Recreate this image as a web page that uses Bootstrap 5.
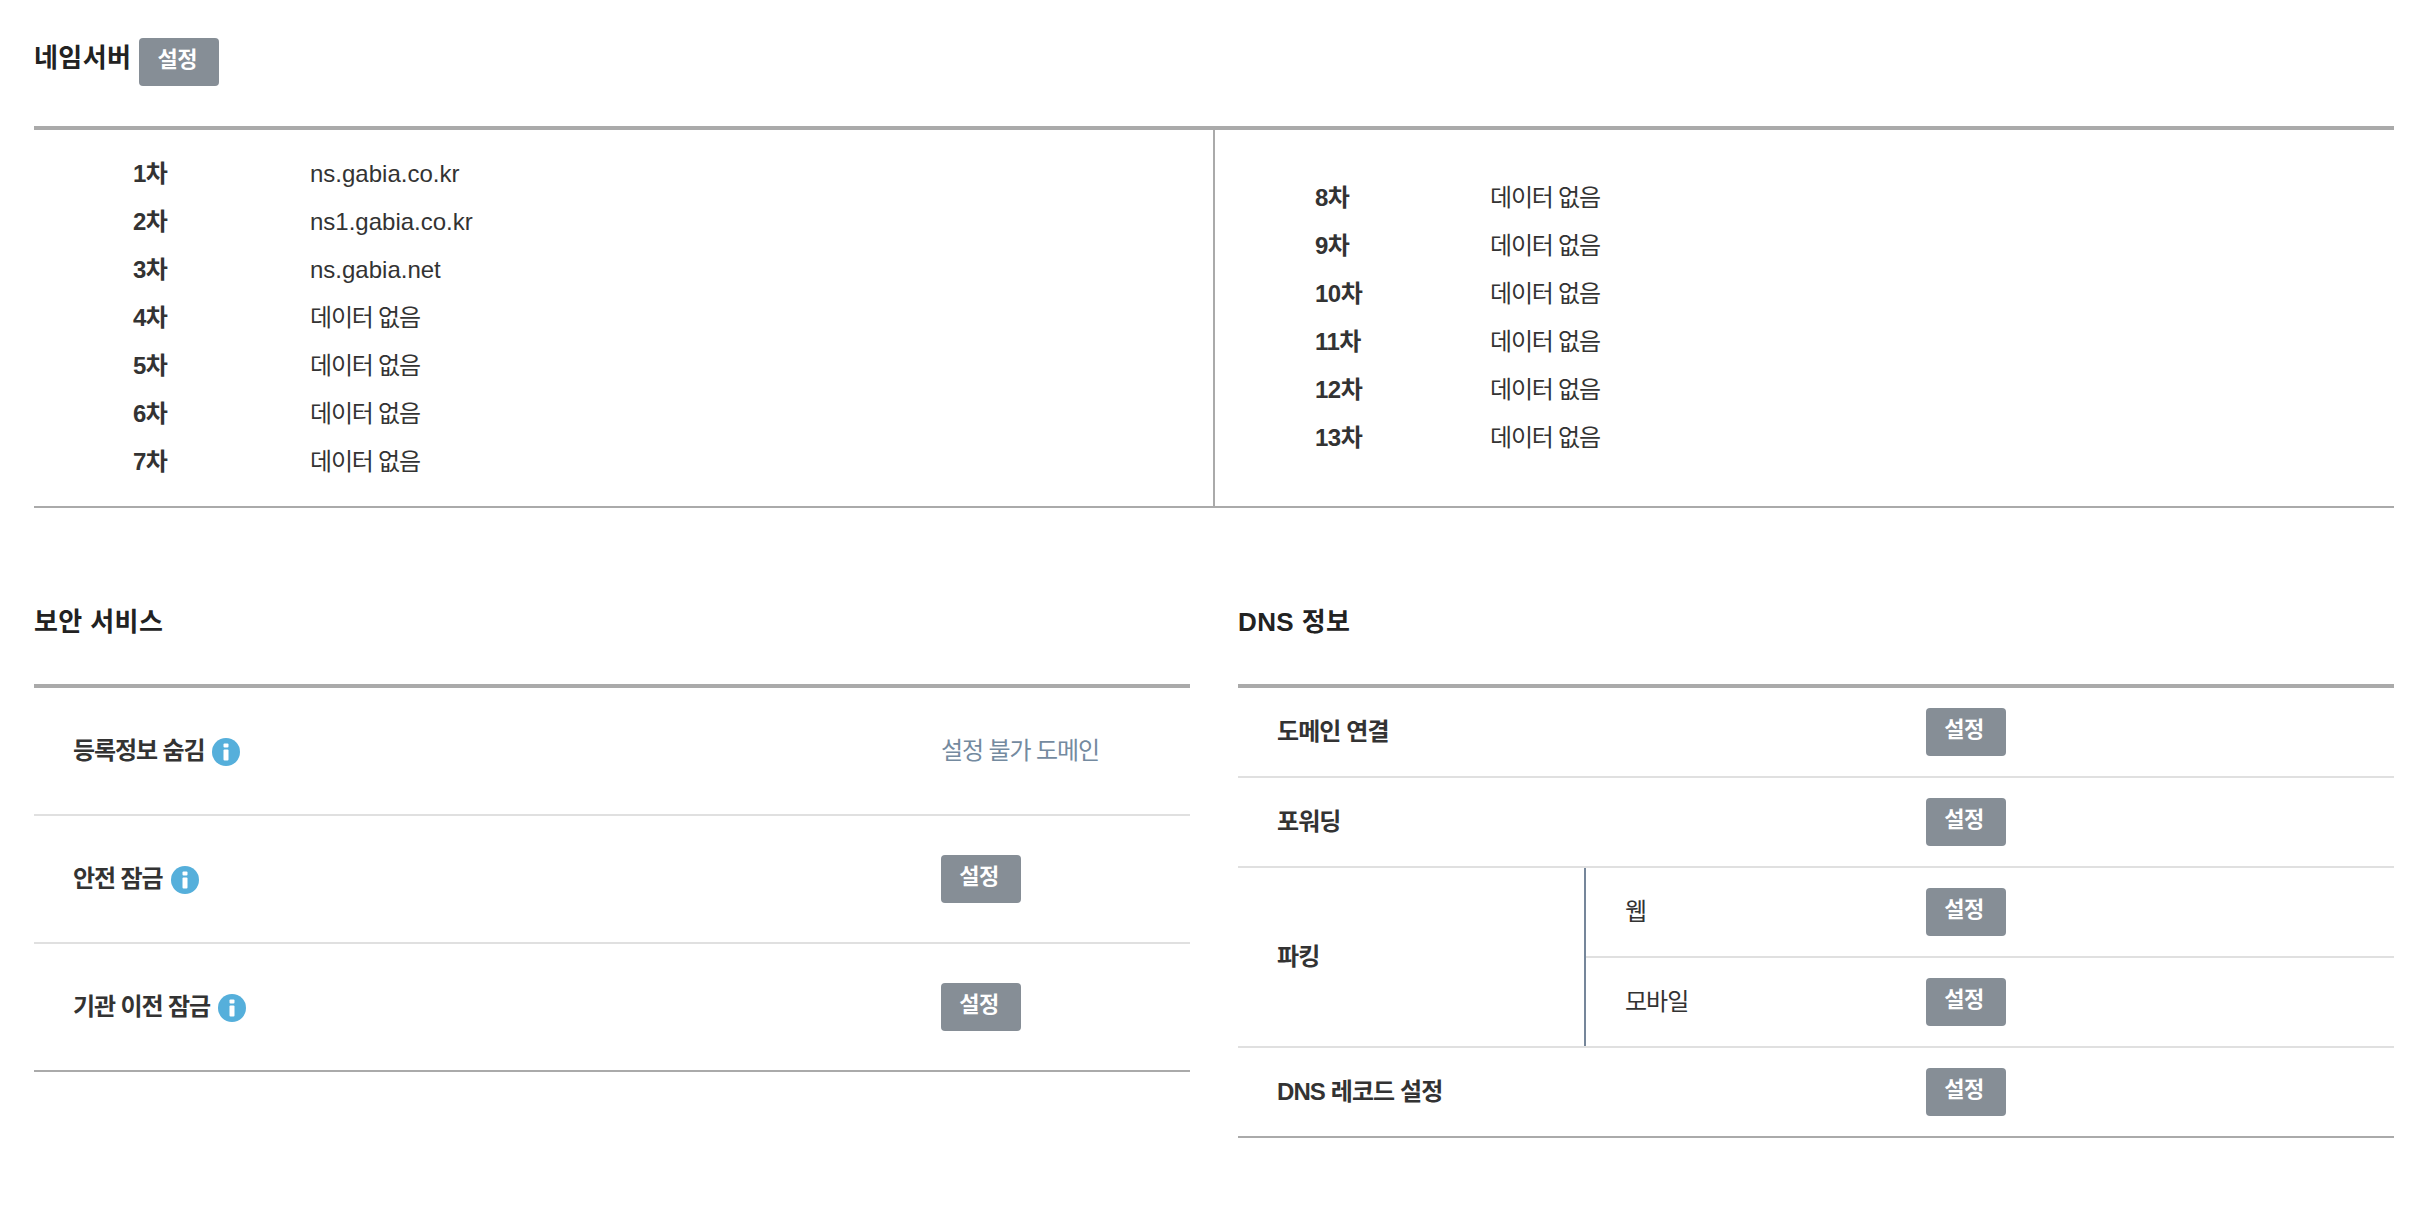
<!doctype html>
<html lang="ko"><head><meta charset="utf-8"><title>도메인</title>
<link href="https://cdn.jsdelivr.net/npm/bootstrap@5.3.0/dist/css/bootstrap.min.css" rel="stylesheet">
<style>
body{font-family:"Liberation Sans","Noto Sans CJK KR",sans-serif;color:#333;background:#fff;font-size:24px}
.page-wrap{padding:38px 26px 0 34px;width:2420px}
.sec-title{font-size:26px;font-weight:700;color:#222;margin:0;line-height:41px;letter-spacing:.4px}
.head-row{height:88px}
.set-btn{display:inline-block;width:80px;height:48px;background:#868e96;color:#fff;border:0;border-radius:4px;font-size:22px;font-weight:700;padding:0 4px 5px 0;line-height:43px;text-align:center;letter-spacing:-.5px}
.ns-box{border-top:4px solid #aaa;border-bottom:2px solid #aaa;height:382px}
.ns-col{width:50%;padding-left:99px;display:flex;flex-direction:column;justify-content:center}
.ns-col+.ns-col{border-left:2px solid #aaa;padding-left:100px;margin-left:-1px}
.ns-item{height:48px;display:flex;align-items:center}
.ns-key{width:177px;font-weight:700;letter-spacing:-.5px}
.ns-col+.ns-col .ns-key{width:175px}
.no-data{letter-spacing:-1.2px}
.sec-two{margin-top:94px;display:grid;grid-template-columns:1156px 1156px;column-gap:48px}
.sec-head{height:82px}
.tbl-sec{border-top:4px solid #aaa;border-bottom:2px solid #aaa}
.sec-row{height:128px;border-bottom:2px solid #e0e0e0;padding-left:39px;display:flex;align-items:center}
.sec-row:last-child{border-bottom:0;height:126px}
.sec-name{width:868px;font-weight:700;display:flex;align-items:center;gap:8px;letter-spacing:-1.1px}
.info-dot{width:28px;height:28px;flex:none;margin-top:1px}
.muted-note{color:#748a9f;letter-spacing:-1.1px}
.dns-box{border-top:4px solid #aaa;border-bottom:2px solid #aaa}
.dns-row{height:90px;border-bottom:2px solid #e0e0e0;display:flex;align-items:center;padding-left:39px}
.dns-row:last-child{border-bottom:0;height:88px}
.dns-name{font-weight:700;width:649px;letter-spacing:-.9px}
.park{display:flex;height:180px;border-bottom:2px solid #e0e0e0}
.park-name{width:348px;padding-left:39px;font-weight:700;display:flex;align-items:center;letter-spacing:-.9px;border-right:2px solid #75869a}
.park-sub{flex:1;display:flex;flex-direction:column}
.park-row{height:90px;display:flex;align-items:center;padding-left:39px;border-bottom:2px solid #e0e0e0}
.park-row:last-child{border-bottom:0;height:88px}
.park-label{width:301px;letter-spacing:-1px}
</style></head><body>
<div class="page-wrap">
<div class="d-flex align-items-start head-row gap-2"><h2 class="sec-title">네임서버</h2><button class="set-btn">설정</button></div>
<div class="ns-box d-flex">
<div class="ns-col">
<div class="ns-item"><span class="ns-key">1차</span><span>ns.gabia.co.kr</span></div>
<div class="ns-item"><span class="ns-key">2차</span><span>ns1.gabia.co.kr</span></div>
<div class="ns-item"><span class="ns-key">3차</span><span>ns.gabia.net</span></div>
<div class="ns-item"><span class="ns-key">4차</span><span class="no-data">데이터 없음</span></div>
<div class="ns-item"><span class="ns-key">5차</span><span class="no-data">데이터 없음</span></div>
<div class="ns-item"><span class="ns-key">6차</span><span class="no-data">데이터 없음</span></div>
<div class="ns-item"><span class="ns-key">7차</span><span class="no-data">데이터 없음</span></div>
</div>
<div class="ns-col">
<div class="ns-item"><span class="ns-key">8차</span><span class="no-data">데이터 없음</span></div>
<div class="ns-item"><span class="ns-key">9차</span><span class="no-data">데이터 없음</span></div>
<div class="ns-item"><span class="ns-key">10차</span><span class="no-data">데이터 없음</span></div>
<div class="ns-item"><span class="ns-key">11차</span><span class="no-data">데이터 없음</span></div>
<div class="ns-item"><span class="ns-key">12차</span><span class="no-data">데이터 없음</span></div>
<div class="ns-item"><span class="ns-key">13차</span><span class="no-data">데이터 없음</span></div>
</div>
</div>
<div class="sec-two">
<div>
<div class="sec-head"><h2 class="sec-title">보안 서비스</h2></div>
<div class="tbl-sec">
<div class="sec-row"><div class="sec-name">등록정보 숨김 <svg class="info-dot" viewBox="0 0 28 28"><circle cx="14" cy="14" r="14" fill="#55afdb"/><rect x="11.5" y="5.5" width="5" height="4" rx="1" fill="#fff"/><rect x="11.5" y="11.5" width="5" height="11" rx="1" fill="#fff"/></svg></div><div class="muted-note">설정 불가 도메인</div></div>
<div class="sec-row"><div class="sec-name">안전 잠금 <svg class="info-dot" viewBox="0 0 28 28"><circle cx="14" cy="14" r="14" fill="#55afdb"/><rect x="11.5" y="5.5" width="5" height="4" rx="1" fill="#fff"/><rect x="11.5" y="11.5" width="5" height="11" rx="1" fill="#fff"/></svg></div><button class="set-btn">설정</button></div>
<div class="sec-row"><div class="sec-name">기관 이전 잠금 <svg class="info-dot" viewBox="0 0 28 28"><circle cx="14" cy="14" r="14" fill="#55afdb"/><rect x="11.5" y="5.5" width="5" height="4" rx="1" fill="#fff"/><rect x="11.5" y="11.5" width="5" height="11" rx="1" fill="#fff"/></svg></div><button class="set-btn">설정</button></div>
</div>
</div>
<div>
<div class="sec-head"><h2 class="sec-title">DNS 정보</h2></div>
<div class="dns-box">
<div class="dns-row"><div class="dns-name">도메인 연결</div><button class="set-btn">설정</button></div>
<div class="dns-row"><div class="dns-name">포워딩</div><button class="set-btn">설정</button></div>
<div class="park"><div class="park-name">파킹</div><div class="park-sub">
<div class="park-row"><div class="park-label">웹</div><button class="set-btn">설정</button></div>
<div class="park-row"><div class="park-label">모바일</div><button class="set-btn">설정</button></div>
</div></div>
<div class="dns-row"><div class="dns-name">DNS 레코드 설정</div><button class="set-btn">설정</button></div>
</div>
</div>
</div>
</div>
<script src="https://cdn.jsdelivr.net/npm/bootstrap@5.3.0/dist/js/bootstrap.bundle.min.js"></script>
</body></html>
